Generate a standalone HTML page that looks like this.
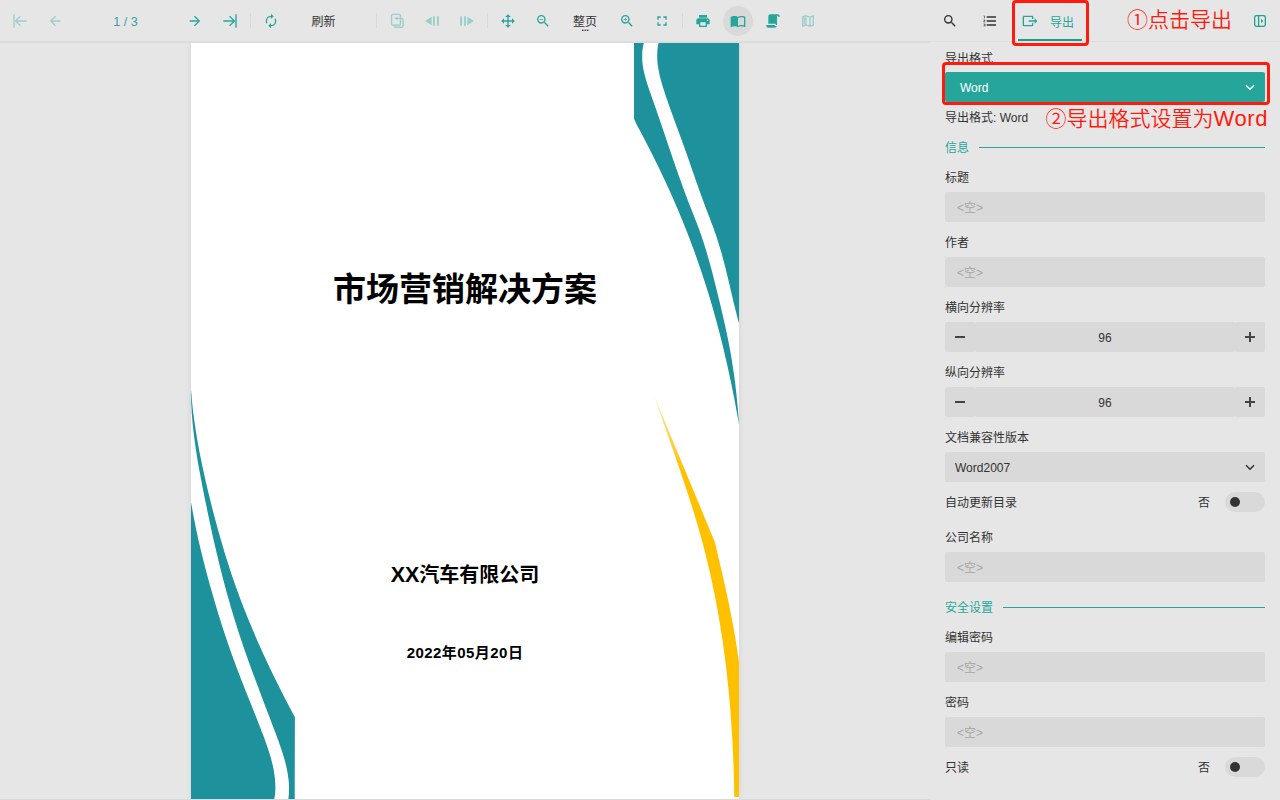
<!DOCTYPE html>
<html lang="zh-CN">
<head>
<meta charset="utf-8">
<title>导出 Word</title>
<style>
*{box-sizing:border-box;margin:0;padding:0}
html,body{width:1280px;height:800px;overflow:hidden;background:#e6e6e6}
body{position:relative;font-family:"Liberation Sans","Noto Sans CJK SC",sans-serif;font-size:12px;color:#333}
.abs{position:absolute}
#toolbar{position:absolute;left:0;top:0;width:1280px;height:41px;background:#e6e6e6;z-index:2}
#tbline{z-index:2;position:absolute;left:0;top:41px;width:930px;height:2px;background:#dcdcdc}
#tbline2{z-index:2;position:absolute;left:930px;top:41px;width:350px;height:1px;background:#dedede}
#panel{position:absolute;left:0;top:0;width:0;height:0;z-index:3}
.seg{position:absolute;top:0;height:30px;background:#d9d9d9;border-radius:2px}
#toolbar svg{position:absolute;overflow:visible}
.sep{position:absolute;top:13px;width:1px;height:15px;background:#d9d9d9}
.t{position:absolute;white-space:nowrap;line-height:14px}
.teal{color:#26a69a}
#page{position:absolute;left:191px;top:43px;width:548px;height:756px;background:#fff;overflow:hidden;box-shadow:0 0 5px rgba(0,0,0,.1)}
#page svg{position:absolute;left:0;top:0}
.doc{position:absolute;left:0;width:548px;text-align:center;font-weight:700;color:#000;white-space:nowrap;font-family:"Liberation Sans","Noto Sans CJK SC",sans-serif}
#bottomstrip{position:absolute;left:0;top:799px;width:930px;height:1px;background:#d9d9d9;z-index:2}
.lbl{position:absolute;left:945px;line-height:14px;white-space:nowrap;color:#333}
.inp{position:absolute;left:945px;width:320px;height:30px;background:#d9d9d9;border-radius:2px}
.ph{position:absolute;left:12px;top:9px;line-height:14px;color:#a6a6a6;white-space:nowrap}
.sec{position:absolute;left:945px;line-height:14px;color:#26a69a;white-space:nowrap}
.secline{position:absolute;height:1px;background:#26a69a}
.tog{position:absolute;left:1225px;width:40px;height:20px;border-radius:10px;background:#d9d9d9}
.tog i{position:absolute;left:5px;top:5px;width:10px;height:10px;border-radius:50%;background:#333}
.red{position:absolute;color:#ff1a0e;font-size:21.33px;line-height:24px;white-space:nowrap;font-weight:350;font-family:"Liberation Sans","Noto Sans CJK SC",sans-serif}
.redbox{position:absolute;border:3px solid #ff1a0e;border-radius:4px}
</style>
</head>
<body>
<div id="tbline"></div><div id="tbline2"></div>
<div id="toolbar">
<svg style="left:12px;top:13px" width="16" height="16" viewBox="0 0 24 24"><path fill="#9ccfc9" d="M11.92,19.92L4,12L11.92,4.08L13.33,5.5L7.83,11H22V13H7.83L13.34,18.5L11.92,19.92M4,12V2H2V22H4V12Z"/></svg>
<svg style="left:47px;top:13px" width="16" height="16" viewBox="0 0 24 24"><path fill="#9ccfc9" d="M20,11V13H8L13.5,18.5L12.08,19.92L4.16,12L12.08,4.08L13.5,5.5L8,11H20Z"/></svg>
<div class="t" style="color:#3a9fa6;left:75.5px;top:14px;width:100px;text-align:center;font-size:12.5px;line-height:16px">1 / 3</div>
<svg style="left:187px;top:13px" width="16" height="16" viewBox="0 0 24 24"><path fill="#26a69a" d="M4,11V13H16L10.5,18.5L11.92,19.92L19.84,12L11.92,4.08L10.5,5.5L16,11H4Z"/></svg>
<svg style="left:221.6px;top:13px" width="16" height="16" viewBox="0 0 24 24"><path fill="#26a69a" d="M12.08,4.08L20,12L12.08,19.92L10.67,18.5L16.17,13H2V11H16.17L10.67,5.5L12.08,4.08M20,12V22H22V2H20V12Z"/></svg>
<div class="sep" style="left:250px"></div>
<svg style="left:263px;top:13px" width="16" height="16" viewBox="0 0 24 24"><path fill="#26a69a" d="M12,6V9L16,5L12,1V4A8,8 0 0,0 4,12C4,13.57 4.46,15.03 5.24,16.26L6.7,14.8C6.25,13.97 6,13 6,12A6,6 0 0,1 12,6M18.76,7.74L17.3,9.2C17.74,10.04 18,11 18,12A6,6 0 0,1 12,18V15L8,19L12,23V20A8,8 0 0,0 20,12C20,10.43 19.54,8.97 18.76,7.74Z"/></svg>
<div class="t" style="left:311.5px;top:15px">刷新</div>
<div class="sep" style="left:376px"></div>
<svg style="left:389px;top:13px" width="16" height="16" viewBox="389 13 16 16"><g fill="none" stroke="#9ccfc9" stroke-width="1.4"><rect x="391.6" y="14.4" width="8.8" height="10.8" rx="1.2"/><path d="M396 18.4H401.5Q403.1 18.4 403.1 20V25.7Q403.1 27.3 401.5 27.3H394.5" stroke-linecap="round"/></g><path fill="#9ccfc9" d="M394.6 18.4L397.6 16.2V20.6Z"/></svg>
<svg style="left:424px;top:13px" width="16" height="16" viewBox="424 13 16 16"><path fill="#9ccfc9" d="M425.1 21L431.7 16.7V25.3ZM433 16.2H434.9V25.8H433ZM437 16.2H438.9V25.8H437Z"/></svg>
<svg style="left:459px;top:13px" width="16" height="16" viewBox="459 13 16 16"><path fill="#9ccfc9" d="M473.9 21L467.3 16.7V25.3ZM464.1 16.2H466V25.8H464.1ZM460.1 16.2H462V25.8H460.1Z"/></svg>
<div class="sep" style="left:487px"></div>
<svg style="left:500px;top:13px" width="16" height="16" viewBox="0 0 24 24"><path fill="#26a69a" d="M13,6V11H18V7.75L22.25,12L18,16.25V13H13V18H16.25L12,22.25L7.75,18H11V13H6V16.25L1.75,12L6,7.75V11H11V6H7.75L12,1.75L16.25,6H13Z"/></svg>
<svg style="left:535px;top:13px" width="16" height="16" viewBox="0 0 24 24"><path fill="#26a69a" d="M15.5,14H14.71L14.43,13.73C15.41,12.59 16,11.11 16,9.5A6.5,6.5 0 0,0 9.5,3A6.5,6.5 0 0,0 3,9.5A6.5,6.5 0 0,0 9.5,16C11.11,16 12.59,15.41 13.73,14.43L14,14.71V15.5L19,20.5L20.5,19L15.5,14M9.5,14C7,14 5,12 5,9.5C5,7 7,5 9.5,5C12,5 14,7 14,9.5C14,12 12,14 9.5,14M7,9H12V10H7V9Z"/></svg>
<div class="t" style="left:573px;top:15px">整页</div>
<div class="t" style="left:581.6px;top:22.5px;font-size:9px;line-height:10px;letter-spacing:0;color:#222;font-weight:700">...</div>
<svg style="left:619px;top:13px" width="16" height="16" viewBox="0 0 24 24"><path fill="#26a69a" d="M15.5,14H14.71L14.43,13.73C15.41,12.59 16,11.11 16,9.5A6.5,6.5 0 0,0 9.5,3A6.5,6.5 0 0,0 3,9.5A6.5,6.5 0 0,0 9.5,16C11.11,16 12.59,15.41 13.73,14.43L14,14.71V15.5L19,20.5L20.5,19L15.5,14M9.5,14C7,14 5,12 5,9.5C5,7 7,5 9.5,5C12,5 14,7 14,9.5C14,12 12,14 9.5,14M12,10H10V12H9V10H7V9H9V7H10V9H12V10Z"/></svg>
<svg style="left:654px;top:13px" width="16" height="16" viewBox="0 0 24 24"><path fill="#26a69a" d="M5,5H10V7H7V10H5V5M14,5H19V10H17V7H14V5M17,14H19V19H14V17H17V14M10,17V19H5V14H7V17H10Z"/></svg>
<div class="sep" style="left:682px"></div>
<svg style="left:695px;top:13px" width="16" height="16" viewBox="0 0 24 24"><path fill="#26a69a" d="M18,3H6V7H18M19,12A1,1 0 0,1 18,11A1,1 0 0,1 19,10A1,1 0 0,1 20,11A1,1 0 0,1 19,12M16,19H8V14H16M19,8H5A3,3 0 0,0 2,11V17H6V21H18V17H22V11A3,3 0 0,0 19,8Z"/></svg>
<div class="abs" style="left:723px;top:6px;width:30px;height:30px;border-radius:50%;background:#d9d9d9"></div>
<svg style="left:730px;top:13px" width="16" height="16" viewBox="0 0 24 24"><path fill="#26a69a" d="M21,5C19.89,4.65 18.67,4.5 17.5,4.5C15.55,4.5 13.45,4.9 12,6C10.55,4.9 8.45,4.5 6.5,4.5C4.55,4.5 2.45,4.9 1,6V20.65C1,20.9 1.25,21.15 1.5,21.15C1.6,21.15 1.65,21.1 1.75,21.1C3.1,20.45 5.05,20 6.5,20C8.45,20 10.55,20.4 12,21.5C13.35,20.65 15.8,20 17.5,20C19.15,20 20.85,20.3 22.25,21.05C22.35,21.1 22.4,21.1 22.5,21.1C22.75,21.1 23,20.85 23,20.6V6C22.4,5.55 21.75,5.25 21,5M21,18.5C19.9,18.15 18.7,18 17.5,18C15.8,18 13.35,18.65 12,19.5V8C13.35,7.15 15.8,6.5 17.5,6.5C18.7,6.5 19.9,6.65 21,7V18.5Z"/></svg>
<svg style="left:765px;top:13px" width="16" height="16" viewBox="0 0 24 24"><path fill="#26a69a" d="M17.8,20C17.4,21.2 16.3,22 15,22H5C3.3,22 2,20.7 2,19V18H5L14.2,18C14.6,19.2 15.7,20 17,20H17.8M19,2C20.7,2 22,3.3 22,5V6H20V5C20,4.4 19.6,4 19,4C18.4,4 18,4.4 18,5V18H17C16.4,18 16,17.6 16,17V16H5V5C5,3.3 6.3,2 8,2H19Z"/></svg>
<svg style="left:800px;top:13px" width="16" height="16" viewBox="0 0 24 24"><path fill="#9ccfc9" d="M9,3L3.36,4.9C3.15,4.97 3,5.15 3,5.38V20.5A0.5,0.5 0 0,0 3.5,21L3.66,20.97L9,18.9L15,21L20.64,19.1C20.85,19.03 21,18.85 21,18.62V3.5A0.5,0.5 0 0,0 20.5,3L20.34,3.03L15,5.1L9,3M8,5.45V17.15L5,18.31V6.46L8,5.45M10,5.47L14,6.87V18.53L10,17.13V5.47M19,5.7V17.54L16,18.55V6.86L19,5.7M7.46,6.3L5.57,6.97V9.12L7.46,8.45V6.3M7.46,9.05L5.57,9.72V11.87L7.46,11.2V9.05M7.46,11.8L5.57,12.47V14.62L7.46,13.95V11.8M7.46,14.55L5.57,15.22V17.37L7.46,16.7V14.55Z"/></svg>
<svg style="left:942px;top:13px" width="16" height="16" viewBox="0 0 24 24"><path fill="#333" d="M9.5,3A6.5,6.5 0 0,1 16,9.5C16,11.11 15.41,12.59 14.44,13.73L14.71,14H15.5L20.5,19L19,20.5L14,15.5V14.71L13.73,14.44C12.59,15.41 11.11,16 9.5,16A6.5,6.5 0 0,1 3,9.5A6.5,6.5 0 0,1 9.5,3M9.5,5C7,5 5,7 5,9.5C5,12 7,14 9.5,14C12,14 14,12 14,9.5C14,7 12,5 9.5,5Z"/></svg>
<svg style="left:982px;top:13px" width="16" height="16" viewBox="0 0 24 24"><path fill="#333" d="M7,13V11H21V13H7M7,19V17H21V19H7M7,7V5H21V7H7M3,8V5H2V4H4V8H3M2,17V16H5V20H2V19H4V18.5H3V17.5H4V17H2M4.25,10A0.75,0.75 0 0,1 5,10.75C5,10.95 4.92,11.14 4.79,11.27L3.12,13H5V14H2V13.08L4,11H2V10H4.25Z"/></svg>
<svg style="left:1022px;top:13px" width="16" height="16" viewBox="0 0 24 24"><path fill="#26a69a" d="M23,12L19,8V11H10V13H19V16M1,18V6C1,4.89 1.9,4 3,4H15A2,2 0 0,1 17,6V9H15V6H3V18H15V15H17V18A2,2 0 0,1 15,20H3A2,2 0 0,1 1,18Z"/></svg>
<div class="t teal" style="left:1050px;top:16px">导出</div>
<div class="abs" style="left:1018px;top:39px;width:64px;height:2px;background:#17a08e"></div>
<svg style="left:1253px;top:14px" width="14" height="14" viewBox="1253 14 14 14"><g fill="none" stroke="#1fa193" stroke-width="1.3"><rect x="1254.65" y="15.6" width="10.7" height="10.7" rx="1.7"/><path d="M1258.6 15.6V26.3"/></g><path fill="#1fa193" d="M1261 19L1263.3 20.95L1261 22.9Z"/></svg>
</div>
<div id="page">
<svg width="548" height="756" viewBox="0 0 548 756">
<g fill="#1d929c">
<path d="M443.0 0.0 L443.0 75.8 L445.7 81.8 L449.0 87.8 L452.2 93.8 L455.3 99.8 L458.4 105.8 L461.4 111.8 L464.4 117.8 L467.4 123.8 L470.2 129.8 L473.1 135.8 L475.9 141.8 L478.6 147.8 L481.3 153.8 L483.9 159.8 L486.5 165.8 L489.0 171.8 L491.5 177.8 L493.9 183.8 L496.3 189.8 L498.6 195.8 L500.8 201.8 L503.1 207.8 L505.2 213.8 L507.3 219.8 L509.4 225.8 L511.4 231.8 L513.4 237.8 L515.3 243.8 L517.2 249.8 L519.0 255.8 L520.8 261.8 L522.5 267.8 L524.2 273.8 L525.8 279.8 L527.4 285.8 L529.0 291.8 L530.5 297.8 L532.0 303.8 L533.4 309.8 L534.8 315.8 L536.2 321.8 L537.5 327.8 L538.8 333.8 L540.1 339.8 L541.3 345.8 L542.5 351.8 L543.7 357.8 L544.8 363.8 L545.9 369.8 L547.0 375.8 L547.9 381.0 L548.0 381.0 L547.8 378.0 L547.6 375.0 L547.4 372.0 L547.1 369.0 L546.9 366.0 L546.6 363.0 L546.3 360.0 L546.0 357.0 L545.7 354.0 L545.4 351.0 L545.1 348.0 L544.7 345.0 L544.4 342.0 L544.0 339.0 L543.6 336.0 L543.2 333.0 L542.8 330.0 L542.3 327.0 L541.9 324.0 L541.4 321.0 L541.0 318.0 L540.5 315.0 L539.9 312.0 L539.4 309.0 L538.9 306.0 L538.3 303.0 L537.7 300.0 L537.2 297.0 L536.5 294.0 L535.9 291.0 L535.3 288.0 L534.6 285.0 L534.0 282.0 L533.3 279.0 L532.6 276.0 L531.9 273.0 L531.2 270.0 L530.5 267.0 L529.8 264.0 L529.1 261.0 L528.4 258.0 L527.6 255.0 L526.9 252.0 L526.2 249.0 L525.4 246.0 L524.7 243.0 L523.9 240.0 L523.2 237.0 L522.4 234.0 L521.7 231.0 L520.9 228.0 L520.1 225.0 L519.3 222.0 L518.4 219.0 L517.6 216.0 L516.7 213.0 L515.9 210.0 L515.0 207.0 L514.0 204.0 L513.1 201.0 L512.1 198.0 L511.1 195.0 L510.1 192.0 L509.0 189.0 L508.0 186.0 L506.8 183.0 L505.7 180.0 L504.5 177.0 L503.4 174.0 L502.2 171.0 L501.0 168.0 L499.8 165.0 L498.6 162.0 L497.4 159.0 L496.3 156.0 L495.2 153.0 L494.0 150.0 L492.9 147.0 L491.8 144.0 L490.8 141.0 L489.7 138.0 L488.6 135.0 L487.5 132.0 L486.5 129.0 L485.4 126.0 L484.4 123.0 L483.4 120.0 L482.3 117.0 L481.3 114.0 L480.3 111.0 L479.3 108.0 L478.2 105.0 L477.2 102.0 L476.2 99.0 L475.2 96.0 L474.2 93.0 L473.2 90.0 L472.2 87.0 L471.1 84.0 L470.1 81.0 L469.1 78.0 L468.1 75.0 L467.0 72.0 L466.0 69.0 L465.0 66.0 L463.9 63.0 L462.9 60.0 L461.8 57.0 L460.7 54.0 L459.7 51.0 L458.6 48.0 L457.6 45.0 L456.6 42.0 L455.7 39.0 L454.8 36.0 L454.0 33.0 L453.2 30.0 L452.6 27.0 L452.0 24.0 L451.6 21.0 L451.3 18.0 L451.2 15.0 L451.2 12.0 L451.3 9.0 L451.6 6.0 L452.1 3.0 L452.8 0.0 Z"/>
<path d="M467.5 0.0 L548.0 0 L548.0 281.0 L548.2 281.0 L547.6 279.0 L546.8 276.0 L546.0 273.0 L545.3 270.0 L544.5 267.0 L543.8 264.0 L543.0 261.0 L542.3 258.0 L541.6 255.0 L540.9 252.0 L540.2 249.0 L539.5 246.0 L538.8 243.0 L538.1 240.0 L537.4 237.0 L536.7 234.0 L535.9 231.0 L535.2 228.0 L534.5 225.0 L533.7 222.0 L532.9 219.0 L532.1 216.0 L531.3 213.0 L530.5 210.0 L529.6 207.0 L528.7 204.0 L527.8 201.0 L526.8 198.0 L525.9 195.0 L524.9 192.0 L523.8 189.0 L522.8 186.0 L521.7 183.0 L520.5 180.0 L519.4 177.0 L518.3 174.0 L517.1 171.0 L516.0 168.0 L514.8 165.0 L513.7 162.0 L512.6 159.0 L511.5 156.0 L510.4 153.0 L509.3 150.0 L508.2 147.0 L507.2 144.0 L506.1 141.0 L505.0 138.0 L504.0 135.0 L503.0 132.0 L501.9 129.0 L500.9 126.0 L499.8 123.0 L498.8 120.0 L497.8 117.0 L496.7 114.0 L495.7 111.0 L494.6 108.0 L493.6 105.0 L492.5 102.0 L491.4 99.0 L490.3 96.0 L489.2 93.0 L488.1 90.0 L487.0 87.0 L485.9 84.0 L484.8 81.0 L483.7 78.0 L482.6 75.0 L481.5 72.0 L480.4 69.0 L479.3 66.0 L478.3 63.0 L477.2 60.0 L476.2 57.0 L475.1 54.0 L474.1 51.0 L473.2 48.0 L472.2 45.0 L471.3 42.0 L470.4 39.0 L469.6 36.0 L468.8 33.0 L468.2 30.0 L467.6 27.0 L467.1 24.0 L466.6 21.0 L466.4 18.0 L466.2 15.0 L466.2 12.0 L466.3 9.0 L466.5 6.0 L466.9 3.0 L467.5 0.0 Z"/>
<path d="M0 459.5 L0.0 459.5 L0.8 463.5 L1.5 467.5 L2.2 471.5 L3.0 475.5 L3.8 479.5 L4.6 483.5 L5.4 487.5 L6.3 491.5 L7.1 495.5 L8.0 499.5 L9.0 503.5 L9.9 507.5 L10.9 511.5 L11.9 515.5 L12.9 519.5 L13.9 523.5 L15.0 527.5 L16.0 531.5 L17.1 535.5 L18.2 539.5 L19.3 543.5 L20.5 547.5 L21.6 551.5 L22.8 555.5 L23.9 559.5 L25.1 563.5 L26.3 567.5 L27.5 571.5 L28.8 575.5 L30.0 579.5 L31.3 583.5 L32.6 587.5 L33.9 591.5 L35.3 595.5 L36.6 599.5 L38.0 603.5 L39.4 607.5 L40.8 611.5 L42.3 615.5 L43.8 619.5 L45.2 623.5 L46.7 627.5 L48.3 631.5 L49.8 635.5 L51.4 639.5 L52.9 643.5 L54.5 647.5 L56.1 651.5 L57.7 655.5 L59.3 659.5 L60.9 663.5 L62.5 667.5 L64.1 671.5 L65.7 675.5 L67.2 679.5 L68.8 683.5 L70.3 687.5 L71.9 691.5 L73.4 695.5 L74.8 699.5 L76.2 703.5 L77.6 707.5 L78.8 711.5 L80.0 715.5 L81.0 719.5 L82.0 723.5 L82.8 727.5 L83.4 731.5 L83.9 735.5 L84.2 739.5 L84.4 743.5 L84.3 747.5 L84.0 751.5 L83.4 755.5 L83.3 756.0 L0 756.0 Z"/>
<path d="M0 347.0 L0.0 347.0 L0.6 353.0 L1.1 359.0 L1.7 365.0 L2.4 371.0 L3.2 377.0 L4.1 383.0 L5.0 389.0 L6.0 395.0 L7.0 401.0 L8.1 407.0 L9.3 413.0 L10.5 419.0 L11.8 425.0 L13.1 431.0 L14.4 437.0 L15.8 443.0 L17.2 449.0 L18.7 455.0 L20.2 461.0 L21.7 467.0 L23.3 473.0 L24.9 479.0 L26.5 485.0 L28.2 491.0 L29.9 497.0 L31.7 503.0 L33.4 509.0 L35.3 515.0 L37.2 521.0 L39.1 527.0 L41.1 533.0 L43.2 539.0 L45.3 545.0 L47.5 551.0 L49.7 557.0 L52.0 563.0 L54.4 569.0 L56.8 575.0 L59.3 581.0 L61.8 587.0 L64.3 593.0 L66.9 599.0 L69.6 605.0 L72.3 611.0 L75.1 617.0 L77.9 623.0 L80.8 629.0 L83.7 635.0 L86.7 641.0 L89.7 647.0 L92.7 653.0 L95.8 659.0 L99.0 665.0 L102.1 671.0 L103.9 674.3 L103.7 756.0 L97.3 756.0 L97.5 755.0 L97.9 751.0 L98.0 747.0 L98.0 743.0 L97.8 739.0 L97.3 735.0 L96.8 731.0 L96.0 727.0 L95.2 723.0 L94.2 719.0 L93.1 715.0 L91.9 711.0 L90.6 707.0 L89.2 703.0 L87.8 699.0 L86.4 695.0 L84.9 691.0 L83.4 687.0 L81.8 683.0 L80.3 679.0 L78.8 675.0 L77.3 671.0 L75.7 667.0 L74.2 663.0 L72.7 659.0 L71.2 655.0 L69.7 651.0 L68.2 647.0 L66.7 643.0 L65.2 639.0 L63.7 635.0 L62.2 631.0 L60.7 627.0 L59.3 623.0 L57.8 619.0 L56.4 615.0 L55.0 611.0 L53.6 607.0 L52.2 603.0 L50.9 599.0 L49.5 595.0 L48.2 591.0 L46.9 587.0 L45.6 583.0 L44.4 579.0 L43.1 575.0 L41.9 571.0 L40.7 567.0 L39.5 563.0 L38.4 559.0 L37.3 555.0 L36.1 551.0 L35.0 547.0 L34.0 543.0 L32.9 539.0 L31.8 535.0 L30.8 531.0 L29.8 527.0 L28.8 523.0 L27.8 519.0 L26.9 515.0 L25.9 511.0 L25.0 507.0 L24.0 503.0 L23.1 499.0 L22.2 495.0 L21.3 491.0 L20.4 487.0 L19.6 483.0 L18.7 479.0 L17.9 475.0 L17.0 471.0 L16.2 467.0 L15.4 463.0 L14.5 459.0 L13.7 455.0 L12.9 451.0 L12.1 447.0 L11.3 443.0 L10.6 439.0 L9.8 435.0 L9.1 431.0 L8.3 427.0 L7.6 423.0 L6.9 419.0 L6.2 415.0 L5.6 411.0 L5.0 407.0 L4.4 403.0 L3.8 399.0 L3.3 395.0 L2.8 391.0 L2.3 387.0 L1.9 383.0 L1.5 379.0 L1.2 375.0 L0.8 371.0 L0.6 367.0 L0.4 363.0 L0.2 359.0 L0.1 355.0 L0.0 351.0 L0.0 347.0 Z"/>
</g>
<defs><linearGradient id="yg" gradientUnits="userSpaceOnUse" x1="0" y1="352" x2="0" y2="430"><stop offset="0" stop-color="#ffe9a6"/><stop offset="1" stop-color="#ffc000"/></linearGradient></defs>
<path fill="url(#yg)" d="M463.0 352.5 L524.0 499.5 L525.4 505.5 L526.8 511.5 L528.2 517.5 L529.6 523.5 L531.0 529.5 L532.4 535.5 L533.7 541.5 L535.0 547.5 L536.3 553.5 L537.6 559.5 L538.8 565.5 L540.0 571.5 L541.2 577.5 L542.3 583.5 L543.4 589.5 L544.4 595.5 L545.4 601.5 L546.3 607.5 L547.2 613.5 L548.0 619.5 L548 754.0 L543.3 754.0 L543.2 748.5 L543.1 742.5 L542.9 736.5 L542.8 730.5 L542.6 724.5 L542.3 718.5 L542.1 712.5 L541.8 706.5 L541.5 700.5 L541.2 694.5 L540.8 688.5 L540.4 682.5 L540.0 676.5 L539.6 670.5 L539.1 664.5 L538.6 658.5 L538.1 652.5 L537.5 646.5 L536.9 640.5 L536.2 634.5 L535.6 628.5 L534.9 622.5 L534.1 616.5 L533.3 610.5 L532.5 604.5 L531.7 598.5 L530.8 592.5 L529.8 586.5 L528.9 580.5 L527.8 574.5 L526.8 568.5 L525.7 562.5 L524.6 556.5 L523.4 550.5 L522.1 544.5 L520.9 538.5 L519.6 532.5 L518.2 526.5 L516.8 520.5 L515.3 514.5 L513.8 508.5 L512.3 502.5 L510.6 496.5 L509.0 490.5 L507.3 484.5 L505.5 478.5 L503.7 472.5 L501.9 466.5 L500.0 460.5 L498.1 454.5 L496.1 448.5 L494.1 442.5 L492.1 436.5 L490.1 430.5 L488.0 424.5 L486.0 418.5 L483.9 412.5 L481.8 406.5 L479.7 400.5 L477.6 394.5 L475.5 388.5 L473.4 382.5 L471.3 376.5 L469.3 370.5 L467.2 364.5 L465.2 358.5 L463.0 352.5 Z"/>
</svg>
<div class="doc" style="top:225px;font-size:33px;line-height:44px">市场营销解决方案</div>
<div class="doc" style="top:517px;font-size:20px;line-height:30px"><span style="font-size:21.5px">XX</span>汽车有限公司</div>
<div class="doc" style="top:599px;font-size:15px;line-height:22px;letter-spacing:0.45px">2022年05月20日</div>
</div>
<div id="bottomstrip"></div>
<div id="panel">
<div class="lbl" style="top:52px">导出格式</div>
<div class="abs" style="left:945px;top:72px;width:320px;height:30px;background:#26a69a;border-radius:2px"><span class="abs" style="left:15px;top:9px;line-height:14px;color:#fff">Word</span><svg class="abs" style="left:300px;top:12px" width="10" height="7" viewBox="0 0 10 7"><path d="M1 1.2L5 5.2L9 1.2" fill="none" stroke="#fff" stroke-width="1.5"/></svg></div>
<div class="lbl" style="top:111px">导出格式: Word</div>
<div class="sec" style="top:141px">信息</div>
<div class="secline" style="left:979px;top:147px;width:286px"></div>
<div class="lbl" style="top:171px">标题</div>
<div class="inp" style="top:192px"><span class="ph">&lt;空&gt;</span></div>
<div class="lbl" style="top:236px">作者</div>
<div class="inp" style="top:257px"><span class="ph">&lt;空&gt;</span></div>
<div class="lbl" style="top:301px">横向分辨率</div>
<div class="abs" style="left:945px;top:322px;width:320px;height:30px"><span class="seg" style="left:0;width:30px"></span><span class="seg" style="left:30px;width:259.5px"></span><span class="seg" style="left:289.5px;width:30.5px"></span><span class="abs" style="left:10px;top:14px;width:10px;height:2px;background:#444"></span><span class="abs" style="left:0;top:9px;width:320px;text-align:center;line-height:14px;color:#333">96</span><span class="abs" style="left:300px;top:14px;width:10px;height:2px;background:#444"></span><span class="abs" style="left:304px;top:10px;width:2px;height:10px;background:#444"></span></div>
<div class="lbl" style="top:366px">纵向分辨率</div>
<div class="abs" style="left:945px;top:387px;width:320px;height:30px"><span class="seg" style="left:0;width:30px"></span><span class="seg" style="left:30px;width:259.5px"></span><span class="seg" style="left:289.5px;width:30.5px"></span><span class="abs" style="left:10px;top:14px;width:10px;height:2px;background:#444"></span><span class="abs" style="left:0;top:9px;width:320px;text-align:center;line-height:14px;color:#333">96</span><span class="abs" style="left:300px;top:14px;width:10px;height:2px;background:#444"></span><span class="abs" style="left:304px;top:10px;width:2px;height:10px;background:#444"></span></div>
<div class="lbl" style="top:431px">文档兼容性版本</div>
<div class="inp" style="top:452px"><span class="abs" style="left:10px;top:9px;line-height:14px;color:#333">Word2007</span><svg class="abs" style="left:300px;top:11.5px" width="10" height="7" viewBox="0 0 10 7"><path d="M1 1.2L5 5.2L9 1.2" fill="none" stroke="#333" stroke-width="1.5"/></svg></div>
<div class="lbl" style="top:496px">自动更新目录</div>
<div class="lbl" style="left:1198px;top:496px">否</div>
<div class="tog" style="top:492px"><i></i></div>
<div class="lbl" style="top:531px">公司名称</div>
<div class="inp" style="top:552px"><span class="ph">&lt;空&gt;</span></div>
<div class="sec" style="top:601px">安全设置</div>
<div class="secline" style="left:1003px;top:607px;width:262px"></div>
<div class="lbl" style="top:631px">编辑密码</div>
<div class="inp" style="top:652px"><span class="ph">&lt;空&gt;</span></div>
<div class="lbl" style="top:696px">密码</div>
<div class="inp" style="top:717px"><span class="ph">&lt;空&gt;</span></div>
<div class="lbl" style="top:761px">只读</div>
<div class="lbl" style="left:1198px;top:761px">否</div>
<div class="tog" style="top:757px"><i></i></div>
<div class="redbox" style="left:1012px;top:0;width:77px;height:46px"></div>
<div class="redbox" style="left:942px;top:62px;width:328px;height:43px"></div>
<div class="red" style="left:1127px;top:8px;font-size:21px">①点击导出</div>
<div class="red" style="left:1045.5px;top:107px;font-size:21px">②导出格式设置为<span style="font-size:22px;letter-spacing:0.6px">Word</span></div>
</div>
</body>
</html>
